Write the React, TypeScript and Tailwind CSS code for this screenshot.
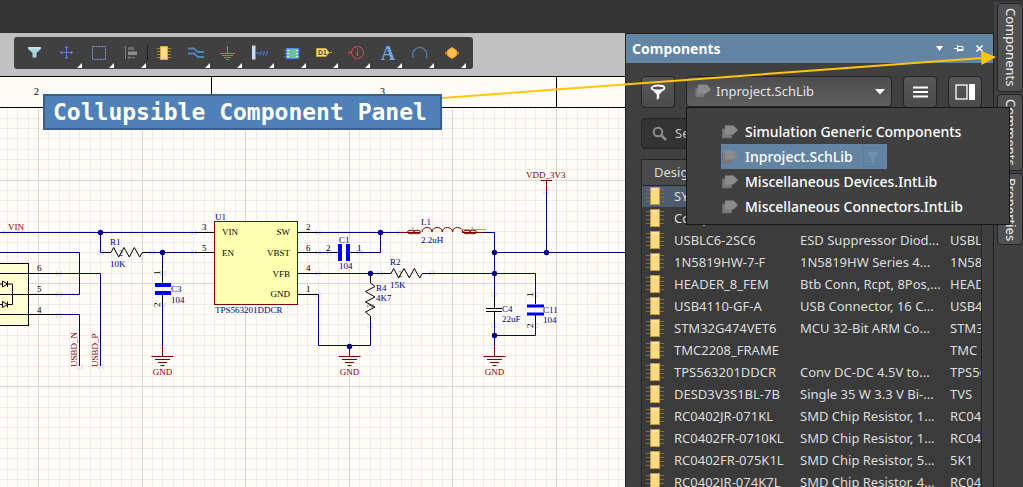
import React from "react";

const NAVY = "#00007f";
const RED = "#7f0000";

type Pt = [number, number];

/* ---------- toolbar ---------- */

const tools: { label: string; menu: boolean; icon: React.ReactNode }[] = [
  {
    label: "Filter",
    menu: false,
    icon: (
      <>
        <path d="M10 10h13v2l-4.500 4v4.500h-4V16L10 12z" fill="#a9d3df" />
        <path d="M11 11h11" stroke="#e2f3f7" />
      </>
    ),
  },
  {
    label: "Move",
    menu: true,
    icon: (
      <path
        d="M16.500 9v13M10 15.500h13M15 10.500h3M15 20.500h3M11.500 14v3M21.500 14v3"
        stroke="#5d84d6"
        fill="none"
      />
    ),
  },
  {
    label: "Select",
    menu: true,
    icon: <rect x="10.500" y="9.500" width="13" height="13" fill="none" stroke="#7b98ea" strokeDasharray="2 1" />,
  },
  {
    label: "Align",
    menu: true,
    icon: (
      <>
        <path d="M11.500 9v13" stroke="#808080" />
        <rect x="14" y="10" width="6" height="3" fill="#6d6d6d" />
        <rect x="14" y="14.500" width="9" height="3.500" fill="#8d8d8d" />
        <path d="M14 20.500h7M16 19l-2 1.500 2 1.500" stroke="#777" fill="none" />
      </>
    ),
  },
  {
    label: "Place part",
    menu: false,
    icon: (
      <>
        <path d="M11 11.500h14M11 14.500h14M11 17.500h14M11 20.500h14" stroke="#a08334" />
        <rect x="14.500" y="9.500" width="7" height="13" fill="#fbd985" stroke="#d9a840" />
      </>
    ),
  },
  {
    label: "Wire",
    menu: true,
    icon: (
      <path
        d="M10 11.500h6l4 3.500h6M10 16.500h6l4 3.500h6"
        stroke="#4b86bd"
        strokeWidth="1.800"
        fill="none"
      />
    ),
  },
  {
    label: "Ground",
    menu: true,
    icon: (
      <path
        d="M17.500 9v7M10 16.500h15M12 18.500h11M14 20.500h7M16 22.500h3"
        stroke="#e3625e"
        fill="none"
      />
    ),
  },
  {
    label: "Bus",
    menu: true,
    icon: (
      <>
        <rect x="10" y="8.500" width="3.500" height="14" fill="#c4dcf8" />
        <path d="M13.500 16h4M18 18.500l1.500-4.500M21 18.500l1.500-4.500M24 18.500l1.500-4.500" stroke="#3f73c4" strokeWidth="1.400" />
      </>
    ),
  },
  {
    label: "Sheet symbol",
    menu: true,
    icon: (
      <>
        <path d="M10 13.500h16M10 16.500h16M10 19.500h16" stroke="#4a7fb5" />
        <rect x="12.500" y="11.500" width="12" height="10" fill="#6cc295" stroke="#4c8ee0" />
        <path d="M13 13.500h2M22 13.500h2M13 16.500h2M22 16.500h2M13 19.500h2M22 19.500h2" stroke="#dff5e8" />
      </>
    ),
  },
  {
    label: "Designator",
    menu: true,
    icon: (
      <>
        <path d="M10.500 11.500H20l3 4-3 4h-9.500z" fill="#f6dc92" stroke="#cfa240" />
        <path d="M23 15.500h3" stroke="#cfa240" />
        <text x="12" y="18" fontSize="7" fontWeight="700" fill="#5b4712" fontFamily="Liberation Sans, sans-serif">
          D1
        </text>
      </>
    ),
  },
  {
    label: "Directive",
    menu: true,
    icon: (
      <>
        <circle cx="19.500" cy="15.500" r="6" fill="none" stroke="#d35450" />
        <path d="M10 15.500h3.500M19.500 14v5M19.500 11.500v1.500" stroke="#d35450" strokeWidth="1.300" />
      </>
    ),
  },
  {
    label: "Text",
    menu: true,
    icon: (
      <text x="18" y="23" fontSize="20" fontWeight="700" textAnchor="middle" fill="#6ea8e6" fontFamily="Liberation Serif, serif">
        A
      </text>
    ),
  },
  {
    label: "Arc",
    menu: true,
    icon: <path d="M11.500 21c-2.500-5.500 1.500-10.500 6.300-10.500S26.500 15.500 24 21" fill="none" stroke="#4e82b4" strokeWidth="1.200" />,
  },
  {
    label: "Harness",
    menu: true,
    icon: (
      <>
        <path d="M11 16h14" stroke="#d08222" strokeWidth="2.500" />
        <path d="M18 10.500l4.500 3v5L18 21.500l-4.500-3v-5z" fill="#fcc14c" stroke="#f0a52c" />
      </>
    ),
  },
];

function Toolbar() {
  return (
    <div className="flex h-[43px] shrink-0 items-start bg-[#c1c1c1] pl-3.5 pt-1">
      <div className="flex h-8 rounded-[3px] bg-[#404040] pl-1 pr-[7px]">
        {tools.map((t, i) => (
          <button key={t.label} type="button" aria-label={t.label} className="block h-8 w-8">
            <svg width="32" height="32" viewBox="0 0 32 32">
              {i === 4 && <path d="M1.500 8v16" stroke="#222" />}
              {t.icon}
              {t.menu && <path d="M32 26v5h-5z" fill="#fff" />}
            </svg>
          </button>
        ))}
      </div>
    </div>
  );
}

/* ---------- schematic ---------- */

function Wire({ d, c = NAVY }: { d: string; c?: string }) {
  return <path d={d} stroke={c} fill="none" />;
}

function Label({
  x,
  y,
  children,
  c = NAVY,
  anchor = "start",
  up = false,
  size = 9,
}: {
  x: number;
  y: number;
  children: string;
  c?: string;
  anchor?: "start" | "middle" | "end";
  up?: boolean;
  size?: number;
}) {
  return (
    <text x={x} y={y} fill={c} fontSize={size} textAnchor={anchor} transform={up ? `rotate(-90 ${x} ${y})` : undefined}>
      {children}
    </text>
  );
}

function Ground({ x }: { x: number }) {
  return (
    <>
      <Wire
        c={RED}
        d={`M${x} 346v10.500M${x - 11} 356.500h22M${x - 7.500} 359.500h15M${x - 4.500} 362.500h9M${x - 2} 365.500h4`}
      />
      <Label x={x} y={374.500} c={RED} anchor="middle">
        GND
      </Label>
    </>
  );
}

const verticals = Array.from({ length: 200 }, (_, i) => Math.round(38 - 31.080 + i * 10.360) + 0.500);
const horizontals = Array.from({ length: 120 }, (_, i) => Math.round(180 - 62.160 + i * 10.320) + 0.500);
const dots: Pt[] = [
  [100, 232], [162, 252], [380, 232], [370, 273], [349, 346], [494, 252], [546, 252], [494, 273], [494, 335],
];
const hotspots: Pt[] = [
  [6, 232], [194, 232], [194, 252], [152, 252], [101, 252], [59, 273], [59, 294], [59, 315], [80, 366], [101, 366],
  [163, 273], [163, 304], [163, 346], [318, 232], [318, 252], [318, 273], [318, 294], [329, 252], [360, 252],
  [370, 325], [380, 273], [400, 232], [432, 273], [546, 191], [494, 294], [494, 325], [494, 346], [535, 294],
  [535, 325],
];

function Schematic() {
  return (
    <svg
      className="block min-h-0 w-full flex-1 bg-[#fffcf7]"
      fontFamily="Liberation Serif, Times New Roman, serif"
      role="img"
      aria-label="Power supply schematic"
    >
      <g transform="translate(0 -76)">
        <g stroke="#ecece8">
          {verticals.map((x) => (
            <path key={x} d={`M${x} 109V1300`} />
          ))}
          {horizontals.map((y) => (
            <path key={y} d={`M0 ${y}H2100`} />
          ))}
        </g>
        <g stroke="#d6d6d2">
          {verticals
            .filter((_, i) => i % 10 === 3)
            .map((x) => (
              <path key={x} d={`M${x} 109V1300`} />
            ))}
          {horizontals
            .filter((_, i) => i % 10 === 6)
            .map((y) => (
              <path key={y} d={`M0 ${y}H2100`} />
            ))}
        </g>
        <path d="M0 76.500H2100M0 107.500H2100M211.500 76v31M556.500 76v31" stroke="#000" />
        <Label x={34} y={95} c="#000" size={10}>2</Label>
        <Label x={380} y={95} c="#000" size={10}>3</Label>

        <g fill="#dfe5f4">
          {hotspots.map(([x, y]) => (
            <path
              key={`${x}-${y}`}
              d={`M${x - 3} ${y - 2}h2v2h-2zM${x + 1} ${y - 2}h2v2h-2zM${x - 3} ${y + 1}h2v2h-2zM${x + 1} ${y + 1}h2v2h-2z`}
            />
          ))}
        </g>

        {/* USB protection array */}
        <rect x="-6" y="263.500" width="34.500" height="62" fill="#ffffd2" stroke="#000" />
        <Wire c="#000" d="M0 273.500h59M0 294.500h59M0 314.500h59M0 284H12.500V304.500H0" />
        <path d="M2.500 281l5 3-5 3zM7.500 281v6M2.500 301.500l5 3-5 3zM7.500 301.500v6" fill="#ffffd2" stroke="#000" />
        <Wire d="M0 252.500H79.500V294.500H59M59 273.500H100.500V366M59 314.500H79.500V366" />
        <Label x={37} y={271} c="#000">6</Label>
        <Label x={37} y={292} c="#000">5</Label>
        <Label x={37} y={313} c="#000">4</Label>
        <Label x={77} y={367} c={RED} up>USBD_N</Label>
        <Label x={98} y={367} c={RED} up>USBD_P</Label>

        {/* input */}
        <Label x={8} y={230} c={RED}>VIN</Label>
        <Wire d="M0 232.500H195M100.500 232V252.500H105M148 252.500H195M162.500 252V266M162.500 303V347" />
        <Wire
          c="#000"
          d="M195 232.500h19M195 252.500h19M104 252.500h7l2.700-5 5 9.500 5.300-9.500 5.300 9.500 5-9.500 5.400 9.500 2.600-4.500H150M162.500 266v18M162.500 294v9"
        />
        <Label x={110} y={245}>R1</Label>
        <Label x={119} y={256} c="#333" size={8}>2</Label>
        <Label x={110} y={267}>10K</Label>
        <path d="M155 285h16M155 293h16" stroke="#0000f0" strokeWidth="4" />
        <Label x={171} y={292}>C3</Label>
        <Label x={171} y={303}>104</Label>
        <Label x={160} y={275} c="#000" up>1</Label>
        <Label x={160} y={307} c="#000" up>2</Label>
        <Ground x={162.500} />

        {/* regulator */}
        <rect x="214.500" y="221.500" width="83" height="83" fill="#ffffb0" stroke={RED} />
        <Label x={215} y={220}>U1</Label>
        <Label x={215} y={313}>TPS563201DDCR</Label>
        <Label x={222} y={235} c="#000">VIN</Label>
        <Label x={222} y={256} c="#000">EN</Label>
        <Label x={290} y={235} c="#000" anchor="end">SW</Label>
        <Label x={290} y={256} c="#000" anchor="end">VBST</Label>
        <Label x={290} y={277} c="#000" anchor="end">VFB</Label>
        <Label x={290} y={297} c="#000" anchor="end">GND</Label>
        <Label x={202} y={230} c="#000">3</Label>
        <Label x={202} y={251} c="#000">5</Label>
        <Label x={306} y={230} c="#000">2</Label>
        <Label x={306} y={251} c="#000">6</Label>
        <Label x={306} y={271} c="#000">4</Label>
        <Label x={306} y={292} c="#000">1</Label>
        <Wire c="#000" d="M298 232.500h20M298 252.500h20M298 273.500h20M298 294.500h20M330 252.500h8M350 252.500h8" />
        <Wire d="M318 232.500H400M380.500 232V252.500H358M318 252.500H330M318 273.500H381M318.500 294V345.500H370.500V320" />

        <path d="M340 244v17M348 244v17" stroke="#0000f0" strokeWidth="4" />
        <Label x={339} y={243}>C1</Label>
        <Label x={339} y={269}>104</Label>
        <Label x={326} y={251} c="#000">2</Label>
        <Label x={357} y={251} c="#000">1</Label>

        <Wire
          c="#000"
          d="M381 273.500h10l2.700-5 5 9.500 5.300-9.500 5.300 9.500 5-9.500 5.400 9.500 2.600-4.500H432M370.500 276v7l4.500 3.500-9.500 5 9.500 5.500-9.500 5 9.500 5-9.500 5 5 4v5"
        />
        <Label x={390} y={265}>R2</Label>
        <Label x={398} y={277} c="#333" size={8}>2</Label>
        <Label x={390} y={288}>15K</Label>
        <Label x={376} y={291}>R4</Label>
        <Label x={373} y={308} c="#333" size={8} up>2</Label>
        <Label x={376} y={301}>4K7</Label>
        <Ground x={349.500} />

        {/* output filter */}
        <Wire
          c={RED}
          d="M400 232.500h20M422 232c0-6 10-6 10 0c0-6 10.300-6 10.300 0c0-6 10.300-6 10.300 0c0-6 10-6 10 0M462 232.500h22"
        />
        <ellipse cx="411" cy="232" rx="3.500" ry="1.800" fill="none" stroke={RED} />
        <ellipse cx="417" cy="232" rx="3.500" ry="1.800" fill="none" stroke={RED} />
        <ellipse cx="467" cy="232" rx="3.500" ry="1.800" fill="none" stroke={RED} />
        <ellipse cx="473" cy="232" rx="3.500" ry="1.800" fill="none" stroke={RED} />
        <path d="M461 229.500h25" stroke="#f08458" />
        <Label x={411} y={231} c="#777" size={7}>1</Label>
        <Label x={470} y={231} c="#777" size={7}>2</Label>
        <Label x={421} y={225}>L1</Label>
        <Label x={421} y={243}>2.2uH</Label>
        <Wire d="M484 232.500H494.500V294M494 252.500H2100M432 273.500H535.500V294M494.500 323V346M494 335.500H535.500V325M546.500 190V252" />
        <Wire c="#000" d="M494.500 294v14M494.500 312v11M486 308.500h16M486 311.500h16M535.500 294v10M535.500 315v10" />
        <path d="M527 306h17M527 314h17" stroke="#0000f0" strokeWidth="3" />
        <Label x={502} y={312}>C4</Label>
        <Label x={502} y={322}>22uF</Label>
        <Label x={543} y={313}>C11</Label>
        <Label x={543} y={323}>104</Label>
        <Label x={533} y={297} c="#000" up>1</Label>
        <Label x={533} y={328} c="#000" up>2</Label>
        <Ground x={494.500} />
        <Wire c={RED} d="M541 180.500h11M546.500 180v10" />
        <Label x={526} y={178} c={RED}>VDD_3V3</Label>

        {dots.map(([x, y]) => (
          <circle key={`${x}-${y}`} cx={x + 0.500} cy={y + 0.500} r="2.700" fill={NAVY} />
        ))}
      </g>
    </svg>
  );
}

/* ---------- components panel ---------- */

function LibIcon() {
  return (
    <svg width="18" height="16" viewBox="0 0 18 16" className="shrink-0">
      <path d="M1.500 5h9v9h-9z" fill="#7a7a7a" stroke="#727272" strokeDasharray="1 1" />
      <path d="M4 1.500h8.500l4.500 4.500-4.500 4.500H4z" fill="#8b8b8b" />
    </svg>
  );
}

function ChipIcon() {
  return (
    <svg width="18" height="18" viewBox="0 0 18 18" className="block">
      <path d="M0 2.500h18M0 6.500h18M0 10.500h18M0 14.500h18" stroke="#857036" />
      <rect x="4.500" y=".5" width="9" height="17" fill="#fbd985" stroke="#c29a3d" />
      <path d="M6 2h6" stroke="#fff0c0" />
    </svg>
  );
}

const rows: [string, string, string][] = [
  ["SYMBOL", "", ""],
  ["Component", "", ""],
  ["USBLC6-2SC6", "ESD Suppressor Diod...", "USBLC6"],
  ["1N5819HW-7-F", "1N5819HW Series 4...", "1N5819"],
  ["HEADER_8_FEM", "Btb Conn, Rcpt, 8Pos,...", "HEADER"],
  ["USB4110-GF-A", "USB Connector, 16 C...", "USB4110"],
  ["STM32G474VET6", "MCU 32-Bit ARM Co...", "STM32G"],
  ["TMC2208_FRAME", "", "TMC"],
  ["TPS563201DDCR", "Conv DC-DC 4.5V to...", "TPS563"],
  ["DESD3V3S1BL-7B", "Single 35 W 3.3 V Bi-...", "TVS"],
  ["RC0402JR-071KL", "SMD Chip Resistor, 1...", "RC0402"],
  ["RC0402FR-0710KL", "SMD Chip Resistor, 1...", "RC0402"],
  ["RC0402FR-075K1L", "SMD Chip Resistor, 5...", "5K1"],
  ["RC0402JR-074K7L", "SMD Chip Resistor, 4...", "RC0402"],
];

const libraries = [
  "Simulation Generic Components",
  "Inproject.SchLib",
  "Miscellaneous Devices.IntLib",
  "Miscellaneous Connectors.IntLib",
];

const panelButton =
  "flex h-8 w-[34px] shrink-0 items-center justify-center rounded border border-[#242424] bg-gradient-to-b from-[#575757] to-[#4b4b4b]";

function Panel() {
  return (
    <aside className="flex w-[369px] shrink-0 flex-col border-x border-t border-[#202020] bg-[#404040]">
      <header className="flex h-[29px] shrink-0 items-center bg-[#6384a3] pl-1.5 pr-1 text-white">
        <h2 className="flex-1 text-sm font-bold">Components</h2>
        <button type="button" aria-label="Panel menu" className="w-5">
          <svg width="9" height="9" viewBox="0 0 9 9" className="mx-auto">
            <path d="M1 2h7L4.500 7z" fill="#fff" />
          </svg>
        </button>
        <button type="button" aria-label="Pin panel" className="w-5">
          <svg width="10" height="9" viewBox="0 0 10 9" className="mx-auto">
            <path d="M0 4.500h3.500M3.500 1v7M4 2.500h5v4H4M4 5.500h5" stroke="#fff" fill="none" />
          </svg>
        </button>
        <button type="button" aria-label="Close panel" className="w-5">
          <svg width="9" height="9" viewBox="0 0 9 9" className="mx-auto">
            <path d="M1.500 1.500l6 6M7.500 1.500l-6 6" stroke="#fff" strokeWidth="1.600" />
          </svg>
        </button>
      </header>

      <div className="flex min-h-0 flex-1 flex-col gap-2.5 pl-[15px] pr-[11px] pt-[13px]">
        <div className="flex shrink-0 gap-[11px]">
          <button type="button" aria-label="Filter components" className={panelButton}>
            <svg width="16" height="16" viewBox="0 0 16 16">
              <ellipse cx="8" cy="4" rx="6.500" ry="2.500" fill="none" stroke="#fff" strokeWidth="1.800" />
              <path d="M1.500 5L6.800 10.500V16l2.400-2v-3.500L14.500 5 12 7H4z" fill="#fff" />
            </svg>
          </button>
          <div className="relative flex-1">
            <select
              aria-label="Library"
              defaultValue="Inproject.SchLib"
              className="h-[31px] w-full appearance-none rounded border border-[#242424] bg-gradient-to-b from-[#4c4c4c] to-[#606060] pl-[29px] text-[13px] text-[#e4e4e4]"
            >
              {libraries.map((l) => (
                <option key={l}>{l}</option>
              ))}
            </select>
            <span className="pointer-events-none absolute left-2 top-[7px]">
              <LibIcon />
            </span>
            <svg width="10" height="6" viewBox="0 0 10 6" className="pointer-events-none absolute right-[7px] top-[13px]">
              <path d="M0 0h10L5 5.500z" fill="#fff" />
            </svg>

            <div className="absolute left-0 top-[31px] z-10 w-[324px] border border-[#161616] bg-[#404040] pb-[5px] pl-[34px] pt-[11px]">
              <ul className="flex flex-col items-start text-sm font-medium text-white">
                {libraries.map((l) => (
                  <li
                    key={l}
                    className={
                      l === "Inproject.SchLib"
                        ? "flex h-[25px] items-center gap-1.5 bg-[#6384a3] pr-1"
                        : "flex h-[25px] items-center gap-1.5"
                    }
                  >
                    <LibIcon />
                    <span>{l}</span>
                    {l === "Inproject.SchLib" && (
                      <svg width="20" height="20" viewBox="0 0 20 20" className="ml-1">
                        <rect x=".5" y=".5" width="19" height="19" fill="none" stroke="#5b7d9d" />
                        <path d="M5 5h10v2l-3.500 3v6h-3v-6L5 7z" fill="#7190ad" />
                      </svg>
                    )}
                  </li>
                ))}
              </ul>
            </div>
          </div>
          <button type="button" aria-label="List options" className={panelButton}>
            <svg width="15" height="12" viewBox="0 0 15 12">
              <path d="M0 1.500h15M0 6h15M0 10.500h15" stroke="#fff" strokeWidth="2" />
            </svg>
          </button>
          <button type="button" aria-label="Show details" className={panelButton}>
            <svg width="21" height="16" viewBox="0 0 21 16">
              <rect x="1" y="1" width="11" height="14" fill="none" stroke="#fff" strokeWidth="1.300" />
              <rect x="14" y="0" width="6" height="16" fill="#fff" />
            </svg>
          </button>
        </div>

        <label className="flex h-[31px] shrink-0 items-center gap-2 rounded border border-[#242424] bg-[#333] px-2.5">
          <svg width="15" height="15" viewBox="0 0 15 15">
            <circle cx="6" cy="6" r="4.300" fill="none" stroke="#8c8c8c" strokeWidth="2" />
            <path d="M9 9l5 5" stroke="#8c8c8c" strokeWidth="2.500" />
          </svg>
          <input
            type="search"
            aria-label="Search components"
            placeholder="Search"
            className="min-w-0 flex-1 bg-transparent text-[13px] text-[#ddd] outline-none placeholder:text-[#c8c8c8]"
          />
        </label>

        <div className="min-h-0 flex-1 overflow-hidden border border-b-0 border-[#242424] bg-[#3b3b3b]">
          <table className="w-full table-fixed border-collapse text-left text-[13px] text-[#dedede]">
            <colgroup>
              <col className="w-8" />
              <col className="w-[126px]" />
              <col className="w-[150px]" />
              <col />
            </colgroup>
            <thead>
              <tr className="h-[25px] border-b border-[#242424] bg-[#494949]">
                <th colSpan={2} className="p-0 pl-3 font-normal">Design Item ID</th>
                <th className="p-0 font-normal">Description</th>
                <th className="p-0 font-normal">Name</th>
              </tr>
            </thead>
            <tbody>
              {rows.map(([id, desc, name], i) => (
                <tr key={id} className={i === 0 ? "h-[22px] bg-[#4c5c6c]" : "h-[22px]"}>
                  <td className="p-0 pl-1"><ChipIcon /></td>
                  <td className="whitespace-nowrap p-0 leading-5">{id}</td>
                  <td className="whitespace-nowrap p-0 leading-5">{desc}</td>
                  <td className="overflow-hidden whitespace-nowrap p-0 leading-5">{name}</td>
                </tr>
              ))}
            </tbody>
          </table>
        </div>
      </div>
    </aside>
  );
}

function SideTabs() {
  return (
    <nav className="mt-0.5 flex w-[29px] shrink-0 flex-col gap-0.5 bg-[#404040] pl-[3px] pt-px text-[13px] text-[#eee]">
      {["Components", "Comments", "Properties"].map((t, i) => (
        <button
          key={t}
          type="button"
          className={
            (i === 0 ? "h-[89px]" : i === 1 ? "h-[77px]" : "h-[72px]") +
            " flex w-[26px] shrink-0 items-center justify-start rounded border border-[#242424] bg-[#505050] pt-1 [writing-mode:vertical-rl]"
          }
        >
          {t}
        </button>
      ))}
    </nav>
  );
}

export default function App() {
  return (
    <div className="relative flex h-screen overflow-hidden bg-[#333] font-['Noto_Sans',sans-serif]">
      <div className="flex min-w-0 flex-1 flex-col pt-[33px]">
        <div className="flex min-h-0 flex-1">
          <main className="flex min-w-0 flex-1 flex-col">
            <Toolbar />
            <Schematic />
          </main>
          <Panel />
        </div>
      </div>
      <SideTabs />

      <div className="absolute left-[43px] top-[94px] flex h-9 w-[399px] items-center whitespace-nowrap border-2 border-[#3a5f8c] bg-[#4f81b8] pl-2 font-['DejaVu_Sans_Mono',monospace] text-[23px] font-bold text-white">
        Collupsible Component Panel
      </div>
      <svg className="pointer-events-none absolute left-0 top-0 z-20" width="1023" height="130" viewBox="0 0 1023 130">
        <path d="M442 98L982 58" stroke="#ffc60a" strokeWidth="2" />
        <path d="M981 51l15 6-14.500 8z" fill="#ffc60a" />
      </svg>
    </div>
  );
}
